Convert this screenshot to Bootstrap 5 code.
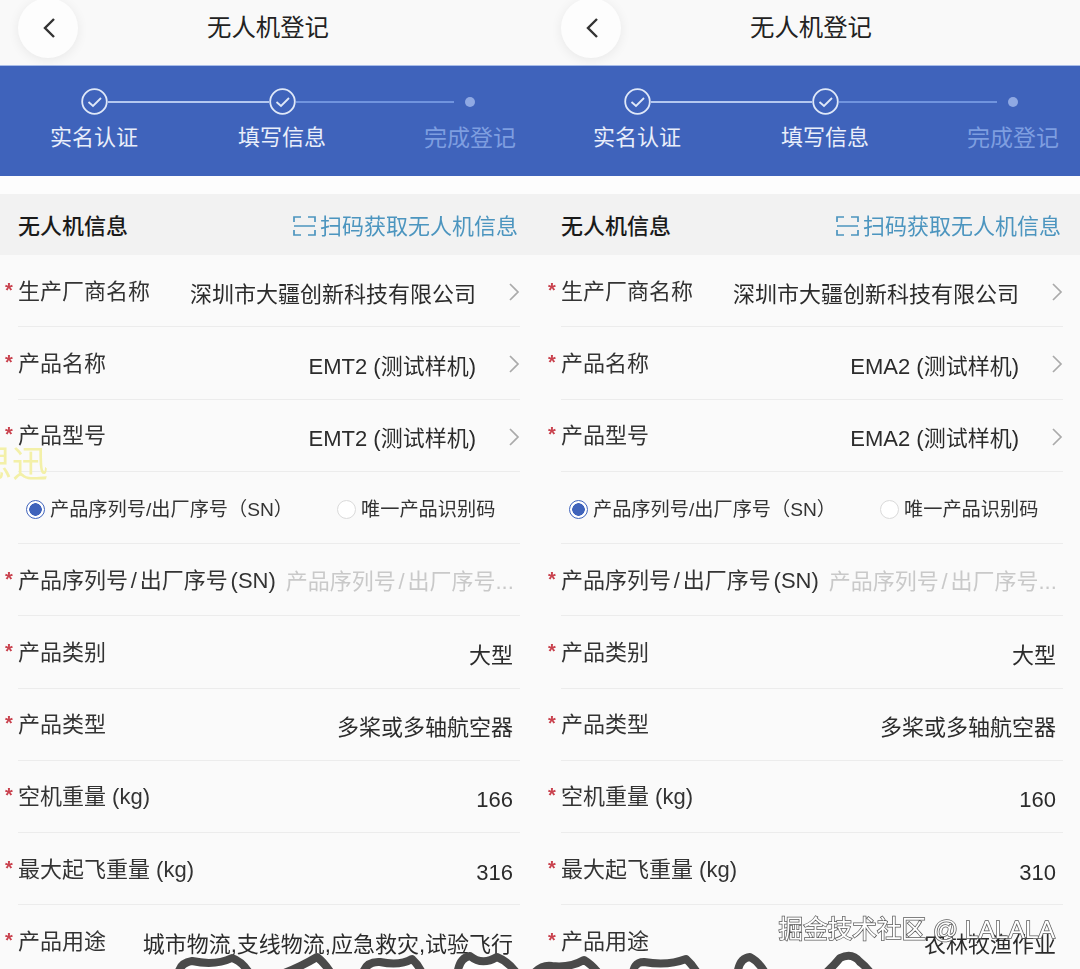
<!DOCTYPE html>
<html lang="zh-CN">
<head>
<meta charset="UTF-8">
<title>无人机登记</title>
<link href="https://cdn.jsdelivr.net/npm/bootstrap@5.3.3/dist/css/bootstrap.min.css" rel="stylesheet">
<style>
  html, body { margin: 0; height: 969px; overflow: hidden; background: #fafafa; }
  body { font-family: "Liberation Sans", "Noto Sans CJK SC", sans-serif; color: #2b2b2b; }
  .shot { position: relative; width: 1080px; height: 969px; overflow: hidden; display: grid; grid-template-columns: 543px 537px; filter: blur(.55px); }
  .phone { width: 543px; height: 969px; overflow: hidden; }

  .topbar { height: 65px; padding-bottom: 9px; background: #f9f9f9; }
  .back-btn { width: 60px; height: 60px; margin-left: 18px; border: 0; padding: 0 0 2px 2px; border-radius: 50%; background: #fdfdfd; box-shadow: 0 2px 12px rgba(0, 0, 0, .07); }
  .page-title { font-size: 24.4px; margin-left: 129px; color: #222; }

  .stepper { height: 111px; background: #3f63bb; border-top: 1px solid #a9bde8; padding-top: 22px; }
  .track { padding-left: 81px; height: 27px; }
  .line-done { width: 161px; height: 2px; background: #b4c8f0; }
  .line-todo { width: 158px; height: 2px; margin-right: 11px; background: #7094de; }
  .dot-todo { width: 10px; height: 10px; border-radius: 50%; background: #8fa9e3; }
  .step-names { display: grid; grid-template-columns: 188px 188px 188px; margin-top: 8px; font-size: 22px; line-height: 30px; color: #e9eefa; text-align: center; }
  .step-names .todo { color: #7e9ee0; font-size: 23px; }

  .gap-strip { height: 18px; background: #fdfdfd; }
  .sec-head { height: 61px; background: #f2f2f2; padding: 3px 25px 0 18px; font-size: 22px; }
  .sec-name { font-weight: 500; color: #1a1a1a; }
  .scan-link { color: #4c95bf; }

  .form-line { height: 72.25px; margin: 0 23px 0 18px; padding-right: 7px; border-bottom: 1px solid #ececec; font-size: 22px; }
  .req { width: 14px; margin-left: -14px; margin-top: -2px; padding-left: 1px; color: #c9424e; font-size: 20px; line-height: 20px; font-weight: 700; }
  .lbl { margin-top: 1px; white-space: nowrap; color: #333; }
  .sn-lbl { word-spacing: -3.3px; }
  .val { margin-top: 7px; white-space: nowrap; color: #2b2b2b; }
  .arrow { width: 12px; height: 20px; margin-left: 32px; margin-right: -7px; margin-top: 3px; flex: none; }
  .radio-line { font-size: 19.2px; padding-left: 8px; padding-top: 6px; }
  .radio-line .form-check { min-height: 0; margin: 0; padding: 0; }
  .radio-line .radio-second { margin-left: 44px; }
  .radio-line .form-check-input { float: none; width: 19px; height: 19px; margin: 0 5px 0 0; vertical-align: -3px; }
  .radio-line .form-check-input:checked { background-color: #fff; border-color: #3f63bb; background-image: radial-gradient(circle, #3f63bb 0 6px, #fff 6.5px); }
  .radio-line .form-check-input:not(:checked) { border-color: #d9d9d9; }
  .radio-line .form-check-label { opacity: 1; color: #333; }
  .sn-input { flex: 1; min-width: 0; margin-left: 10px; margin-top: 3px; padding: 0; border: 0; background: transparent; font-size: 22px; word-spacing: -3.3px; }
  .sn-input::placeholder { color: #c9c9c9; opacity: 1; }

  .stamp-yellow { position: absolute; left: -24px; top: 443px; font-family: "Liberation Serif", "Noto Sans CJK SC", serif; font-size: 36px; color: #f3f0a8; line-height: 44px; }
  .stamp-juejin { position: absolute; right: 25px; top: 914px; font-size: 24.6px; line-height: 32px; color: #fff; -webkit-text-stroke: 1.5px #5a5a5a; paint-order: stroke fill; white-space: nowrap; }
  .scrawl { position: absolute; left: 0; top: 0; pointer-events: none; }
</style>
</head>
<body>
<div class="shot">

  <div class="phone">
    <div class="topbar d-flex align-items-center">
      <button class="back-btn" type="button" aria-label="返回"><svg width="14" height="22" viewBox="0 0 14 22"><path d="M12 2 3 11l9 9" fill="none" stroke="#333" stroke-width="2.4"/></svg></button>
      <div class="page-title">无人机登记</div>
    </div>
    <div class="stepper">
      <div class="track d-flex align-items-center">
        <svg width="27" height="27" viewBox="0 0 27 27"><circle cx="13.5" cy="13.5" r="12.3" fill="none" stroke="#dfe8f8" stroke-width="1.8"/><path d="M7.5 14l4.5 4 8-8" fill="none" stroke="#dfe8f8" stroke-width="1.8"/></svg>
        <div class="line-done"></div>
        <svg width="27" height="27" viewBox="0 0 27 27"><circle cx="13.5" cy="13.5" r="12.3" fill="none" stroke="#dfe8f8" stroke-width="1.8"/><path d="M7.5 14l4.5 4 8-8" fill="none" stroke="#dfe8f8" stroke-width="1.8"/></svg>
        <div class="line-todo"></div>
        <div class="dot-todo"></div>
      </div>
      <div class="step-names"><div>实名认证</div><div>填写信息</div><div class="todo">完成登记</div></div>
    </div>
    <div class="gap-strip"></div>
    <div class="sec-head d-flex align-items-center justify-content-between">
      <span class="sec-name">无人机信息</span>
      <span class="scan-link d-flex align-items-center gap-1"><svg width="23" height="22" viewBox="0 0 23 22"><path d="M1 7V2h7M15 2h7v5M1 15v5h7M15 20h7v-5M1 11h21" fill="none" stroke="#4c95bf" stroke-width="1.7"/></svg>扫码获取无人机信息</span>
    </div>
    <div class="form-line d-flex align-items-center"><span class="req">*</span><span class="lbl">生产厂商名称</span><span class="val ms-auto">深圳市大疆创新科技有限公司</span><svg class="arrow" viewBox="0 0 12 20"><path d="M2 2l8 8-8 8" fill="none" stroke="#aaa" stroke-width="1.7"/></svg></div>
    <div class="form-line d-flex align-items-center"><span class="req">*</span><span class="lbl">产品名称</span><span class="val ms-auto">EMT2 (测试样机)</span><svg class="arrow" viewBox="0 0 12 20"><path d="M2 2l8 8-8 8" fill="none" stroke="#aaa" stroke-width="1.7"/></svg></div>
    <div class="form-line d-flex align-items-center"><span class="req">*</span><span class="lbl">产品型号</span><span class="val ms-auto">EMT2 (测试样机)</span><svg class="arrow" viewBox="0 0 12 20"><path d="M2 2l8 8-8 8" fill="none" stroke="#aaa" stroke-width="1.7"/></svg></div>
    <div class="form-line radio-line d-flex align-items-center">
      <div class="form-check"><input class="form-check-input" type="radio" name="idType1" id="sn1" checked><label class="form-check-label" for="sn1">产品序列号/出厂序号（SN）</label></div>
      <div class="form-check radio-second"><input class="form-check-input" type="radio" name="idType1" id="uid1"><label class="form-check-label" for="uid1">唯一产品识别码</label></div>
    </div>
    <div class="form-line d-flex align-items-center"><span class="req">*</span><span class="lbl sn-lbl">产品序列号 / 出厂序号 (SN)</span><input class="sn-input" type="text" placeholder="产品序列号 / 出厂序号..."></div>
    <div class="form-line d-flex align-items-center"><span class="req">*</span><span class="lbl">产品类别</span><span class="val ms-auto">大型</span></div>
    <div class="form-line d-flex align-items-center"><span class="req">*</span><span class="lbl">产品类型</span><span class="val ms-auto">多桨或多轴航空器</span></div>
    <div class="form-line d-flex align-items-center"><span class="req">*</span><span class="lbl">空机重量 (kg)</span><span class="val ms-auto">166</span></div>
    <div class="form-line d-flex align-items-center"><span class="req">*</span><span class="lbl">最大起飞重量 (kg)</span><span class="val ms-auto">316</span></div>
    <div class="form-line d-flex align-items-center"><span class="req">*</span><span class="lbl">产品用途</span><span class="val ms-auto">城市物流,支线物流,应急救灾,试验飞行</span></div>
  </div>

  <div class="phone">
    <div class="topbar d-flex align-items-center">
      <button class="back-btn" type="button" aria-label="返回"><svg width="14" height="22" viewBox="0 0 14 22"><path d="M12 2 3 11l9 9" fill="none" stroke="#333" stroke-width="2.4"/></svg></button>
      <div class="page-title">无人机登记</div>
    </div>
    <div class="stepper">
      <div class="track d-flex align-items-center">
        <svg width="27" height="27" viewBox="0 0 27 27"><circle cx="13.5" cy="13.5" r="12.3" fill="none" stroke="#dfe8f8" stroke-width="1.8"/><path d="M7.5 14l4.5 4 8-8" fill="none" stroke="#dfe8f8" stroke-width="1.8"/></svg>
        <div class="line-done"></div>
        <svg width="27" height="27" viewBox="0 0 27 27"><circle cx="13.5" cy="13.5" r="12.3" fill="none" stroke="#dfe8f8" stroke-width="1.8"/><path d="M7.5 14l4.5 4 8-8" fill="none" stroke="#dfe8f8" stroke-width="1.8"/></svg>
        <div class="line-todo"></div>
        <div class="dot-todo"></div>
      </div>
      <div class="step-names"><div>实名认证</div><div>填写信息</div><div class="todo">完成登记</div></div>
    </div>
    <div class="gap-strip"></div>
    <div class="sec-head d-flex align-items-center justify-content-between">
      <span class="sec-name">无人机信息</span>
      <span class="scan-link d-flex align-items-center gap-1"><svg width="23" height="22" viewBox="0 0 23 22"><path d="M1 7V2h7M15 2h7v5M1 15v5h7M15 20h7v-5M1 11h21" fill="none" stroke="#4c95bf" stroke-width="1.7"/></svg>扫码获取无人机信息</span>
    </div>
    <div class="form-line d-flex align-items-center"><span class="req">*</span><span class="lbl">生产厂商名称</span><span class="val ms-auto">深圳市大疆创新科技有限公司</span><svg class="arrow" viewBox="0 0 12 20"><path d="M2 2l8 8-8 8" fill="none" stroke="#aaa" stroke-width="1.7"/></svg></div>
    <div class="form-line d-flex align-items-center"><span class="req">*</span><span class="lbl">产品名称</span><span class="val ms-auto">EMA2 (测试样机)</span><svg class="arrow" viewBox="0 0 12 20"><path d="M2 2l8 8-8 8" fill="none" stroke="#aaa" stroke-width="1.7"/></svg></div>
    <div class="form-line d-flex align-items-center"><span class="req">*</span><span class="lbl">产品型号</span><span class="val ms-auto">EMA2 (测试样机)</span><svg class="arrow" viewBox="0 0 12 20"><path d="M2 2l8 8-8 8" fill="none" stroke="#aaa" stroke-width="1.7"/></svg></div>
    <div class="form-line radio-line d-flex align-items-center">
      <div class="form-check"><input class="form-check-input" type="radio" name="idType2" id="sn2" checked><label class="form-check-label" for="sn2">产品序列号/出厂序号（SN）</label></div>
      <div class="form-check radio-second"><input class="form-check-input" type="radio" name="idType2" id="uid2"><label class="form-check-label" for="uid2">唯一产品识别码</label></div>
    </div>
    <div class="form-line d-flex align-items-center"><span class="req">*</span><span class="lbl sn-lbl">产品序列号 / 出厂序号 (SN)</span><input class="sn-input" type="text" placeholder="产品序列号 / 出厂序号..."></div>
    <div class="form-line d-flex align-items-center"><span class="req">*</span><span class="lbl">产品类别</span><span class="val ms-auto">大型</span></div>
    <div class="form-line d-flex align-items-center"><span class="req">*</span><span class="lbl">产品类型</span><span class="val ms-auto">多桨或多轴航空器</span></div>
    <div class="form-line d-flex align-items-center"><span class="req">*</span><span class="lbl">空机重量 (kg)</span><span class="val ms-auto">160</span></div>
    <div class="form-line d-flex align-items-center"><span class="req">*</span><span class="lbl">最大起飞重量 (kg)</span><span class="val ms-auto">310</span></div>
    <div class="form-line d-flex align-items-center"><span class="req">*</span><span class="lbl">产品用途</span><span class="val ms-auto">农林牧渔作业</span></div>
  </div>

  <div class="stamp-yellow">思迅</div>
  <div class="stamp-juejin">掘金技术社区 @ LALALA</div>
  <!-- tops of the big hand lettering, cut off by the bottom edge -->
  <svg class="scrawl" width="1080" height="969" viewBox="0 0 1080 969">
    <g fill="#fff" stroke="#4a4a4a" stroke-width="8" stroke-linejoin="round" stroke-linecap="round">
      <path d="M178 978Q178 963 192 961Q215 966 232 958Q244 962 252 978"/>
      <path d="M268 978Q292 972 317 957Q326 964 334 978"/>
      <path d="M362 978Q364 961 380 962Q400 966 412 959Q420 966 424 978"/>
      <path d="M457 978Q458 958 470 956Q482 966 497 957Q510 962 520 978"/>
      <path d="M530 978Q540 964 552 966Q570 968 584 960Q594 966 602 978"/>
      <path d="M633 978Q632 962 644 962Q668 966 686 959Q694 966 700 978"/>
      <path d="M737 978Q738 958 750 957Q760 962 768 978"/>
      <path d="M820 978Q832 968 840 958Q852 952 860 962Q868 968 874 978"/>
    </g>
  </svg>
</div>
<script src="https://cdn.jsdelivr.net/npm/bootstrap@5.3.3/dist/js/bootstrap.bundle.min.js"></script>
</body>
</html>
